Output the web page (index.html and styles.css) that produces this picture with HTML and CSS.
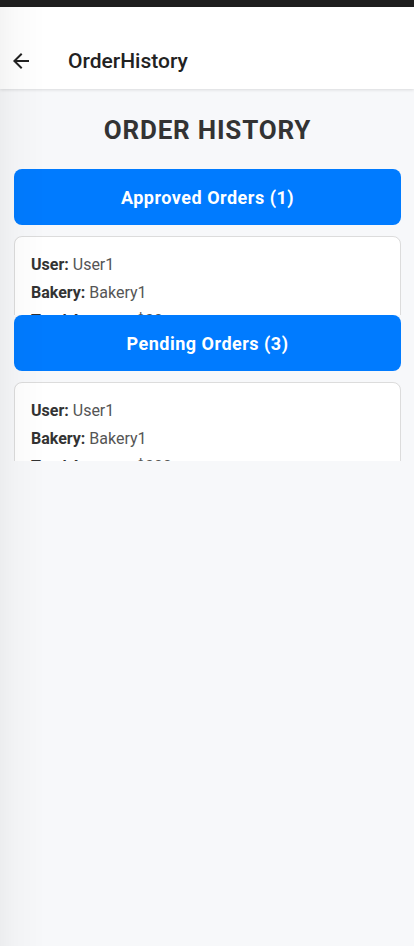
FILE: index.html
```html
<!DOCTYPE html>
<html lang="en">
<head>
<meta charset="utf-8">
<meta name="viewport" content="width=device-width, initial-scale=1">
<title>OrderHistory</title>
<link rel="stylesheet" href="styles.css">
</head>
<body>
<div class="status-bar"></div>
<header class="app-bar">
  <span class="back">
    <svg width="24" height="24" viewBox="0 0 24 24"><path d="M20 11H7.83l5.59-5.59L12 4l-8 8 8 8 1.41-1.41L7.83 13H20v-2z" fill="#222"/></svg>
  </span>
  <span class="app-title">OrderHistory</span>
</header>
<main class="content">
  <h1 class="page-title">ORDER HISTORY</h1>
  <section class="group">
    <button class="group-btn">Approved Orders (1)</button>
    <div class="list">
      <div class="card">
        <p><b>User:</b> User1</p>
        <p><b>Bakery:</b> Bakery1</p>
        <p><b>Total Amount:</b> $30</p>
        <p><b>Status:</b> Approved</p>
      </div>
    </div>
  </section>
  <section class="group">
    <button class="group-btn">Pending Orders (3)</button>
    <div class="list">
      <div class="card">
        <p><b>User:</b> User1</p>
        <p><b>Bakery:</b> Bakery1</p>
        <p><b>Total Amount:</b> $300</p>
        <p><b>Status:</b> Pending</p>
      </div>
    </div>
  </section>
</main>
<div class="edge-shade"></div>
</body>
</html>
```
FILE: styles.css
```css
* { box-sizing: border-box; }
html, body { margin: 0; padding: 0; }
body {
  background: #f7f8fa;
  font-family: Roboto, "Noto Sans", sans-serif;
  min-height: 946px;
}
.status-bar { height: 7px; background: #1f1f1f; }
.app-bar {
  height: 82px;
  padding-top: 26px;
  background: #fff;
  display: flex;
  align-items: center;
  box-shadow: 0 1px 3px rgba(0,0,0,0.12);
  position: relative;
  z-index: 1;
}
.back { display: flex; width: 24px; height: 24px; margin-left: 9px; }
.app-title {
  margin-left: 35px;
  font-size: 21px;
  font-weight: 500;
  color: #222;
}
.content { padding: 0 13px 0 14px; }
.page-title {
  margin: 26px 0 24px;
  text-align: center;
  font-size: 26px;
  line-height: 30px;
  letter-spacing: 0.8px;
  font-weight: 700;
  color: #333;
}
.group-btn {
  display: block;
  width: 100%;
  height: 56px;
  border: 0;
  border-radius: 8px;
  background: #007bff;
  color: #fff;
  font-family: Roboto, sans-serif;
  font-size: 18px;
  letter-spacing: 0.5px;
  font-weight: 700;
  margin: 0 0 11px;
}
.list { height: 79px; overflow: hidden; }
.card {
  background: #fff;
  border: 1px solid #dcdcdc;
  border-radius: 8px;
  padding: 14px 16px;
  box-shadow: 0 1px 2px rgba(0,0,0,0.06);
}
.card p {
  margin: 0;
  font-size: 16px;
  line-height: 28px;
  color: #555;
}
.card b { color: #333; font-weight: 700; }
.edge-shade {
  position: fixed;
  left: 0; top: 7px; bottom: 0;
  width: 45px;
  background: linear-gradient(to right, rgba(0,0,0,0.045) 0, rgba(0,0,0,0.018) 15px, rgba(0,0,0,0) 45px);
  pointer-events: none;
  z-index: 2;
}
```
